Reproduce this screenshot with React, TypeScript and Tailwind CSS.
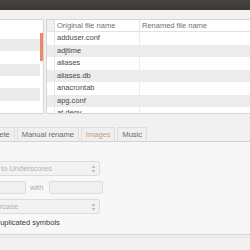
import React from "react";

const files = ["adduser.conf", "adjtime", "aliases", "aliases.db", "anacrontab", "apg.conf", "at.deny"];

function Combo({ text }: { text: string }) {
  return (
    <div className="flex items-center justify-between h-[15px] w-[131px] ml-[-31px] rounded-[3px] border border-[#dcdcdc] bg-[#f2f2f2] px-[4px] text-[#b3b3b3]">
      <span className="whitespace-nowrap">{text}</span>
      <span className="text-[6px] leading-[5px] text-[#b8b8b8] flex flex-col items-center">
        <span>▴</span>
        <span>▾</span>
      </span>
    </div>
  );
}

export default function App() {
  return (
    <div
      className="w-[250px] h-[250px] overflow-hidden bg-[#f2f1f0] text-[7.5px] text-[#4a4a4a] flex flex-col"
      style={{ fontFamily: '"Liberation Sans", Arial, sans-serif' }}
    >
      {/* title bar */}
      <div className="h-[10px] shrink-0 bg-gradient-to-b from-[#45443f] to-[#3a3935]" />
      <div className="h-[9px] shrink-0 bg-[#f2f1f0]" />

      {/* panes */}
      <div className="flex h-[95px] shrink-0 gap-[2px]">
        <div className="w-[44px] shrink-0 border border-l-0 border-[#d6d6d6] bg-white flex overflow-hidden">
          <div className="flex-1 flex flex-col">
            <div className="h-[19px] bg-white" />
            {Array.from({ length: 6 }).map((_, i) => (
              <div key={i} className={`h-[12.5px] ${i % 2 === 0 ? "bg-[#ebebeb]" : "bg-white"}`} />
            ))}
          </div>
          <div className="w-[3px] flex flex-col pt-[13px]">
            <div className="h-[28px] bg-[#ec8963]" />
          </div>
        </div>

        <div className="flex-1 border border-r-0 border-[#d6d6d6] bg-white overflow-hidden">
          <div className="flex h-[12px] border-b border-[#e2e2e2] text-[#707070]">
            <div className="w-[8px] shrink-0 bg-[#f0f0f0] border-r border-[#e0e0e0]" />
            <div className="w-[85px] shrink-0 pl-[2px] border-r border-[#e6e6e6] leading-[12px] whitespace-nowrap">
              Original file name
            </div>
            <div className="pl-[2px] leading-[12px] whitespace-nowrap">Renamed file name</div>
          </div>
          {files.map((f, i) => (
            <div key={f} className={`flex h-[12.5px] ${i % 2 === 1 ? "bg-[#ececec]" : "bg-white"}`}>
              <div className="w-[8px] shrink-0 border-r border-[#e6e6e6]" />
              <div className="w-[85px] shrink-0 pl-[2px] border-r border-[#ececec] leading-[12.5px] whitespace-nowrap">
                {f}
              </div>
              <div className="flex-1" />
            </div>
          ))}
        </div>
      </div>

      <div className="h-[13px] shrink-0" />

      {/* tabs */}
      <div className="flex h-[14px] shrink-0 gap-[2px] ml-[-42px] text-[#6a6a6a]">
        <div className="px-[4px] border border-b-0 border-[#dedede] bg-[#efefef] leading-[13px] whitespace-nowrap">
          Insert / Delete
        </div>
        <div className="px-[4px] border border-b-0 border-[#dedede] bg-[#efefef] leading-[13px] whitespace-nowrap">
          Manual rename
        </div>
        <div className="px-[4px] border border-b-0 border-[#dedede] bg-[#efefef] leading-[13px] whitespace-nowrap text-[#c79a82]">
          Images
        </div>
        <div className="px-[4px] border border-b-0 border-[#dedede] bg-[#efefef] leading-[13px] whitespace-nowrap">
          Music
        </div>
      </div>

      {/* tab content */}
      <div className="h-[94px] shrink-0 border-y border-[#d4d4d4] bg-[#f7f7f7] flex flex-col pt-[19px] gap-[5px]">
        <Combo text="Spaces to Underscores" />
        <div className="flex items-center h-[13px] ml-[-50px] gap-[4px]">
          <div className="w-[76px] h-[13px] rounded-[2px] border border-[#dcdcdc] bg-[#f0f0f0]" />
          <span className="text-[#ababab]">with</span>
          <div className="w-[54px] h-[13px] ml-[2px] rounded-[2px] border border-[#dcdcdc] bg-[#f0f0f0]" />
        </div>
        <Combo text="All lowercase" />
        <div className="ml-[-48px] mt-[-2px] flex items-center gap-[4px] text-[#3c3c3c] whitespace-nowrap">
          <span className="w-[10px] h-[10px] border border-[#c8c8c8] rounded-[2px] bg-white" />
          <span>Remove duplicated symbols</span>
        </div>
      </div>

      <div className="flex-1 border-t border-[#e6e6e6] mt-[2px]" />
    </div>
  );
}
